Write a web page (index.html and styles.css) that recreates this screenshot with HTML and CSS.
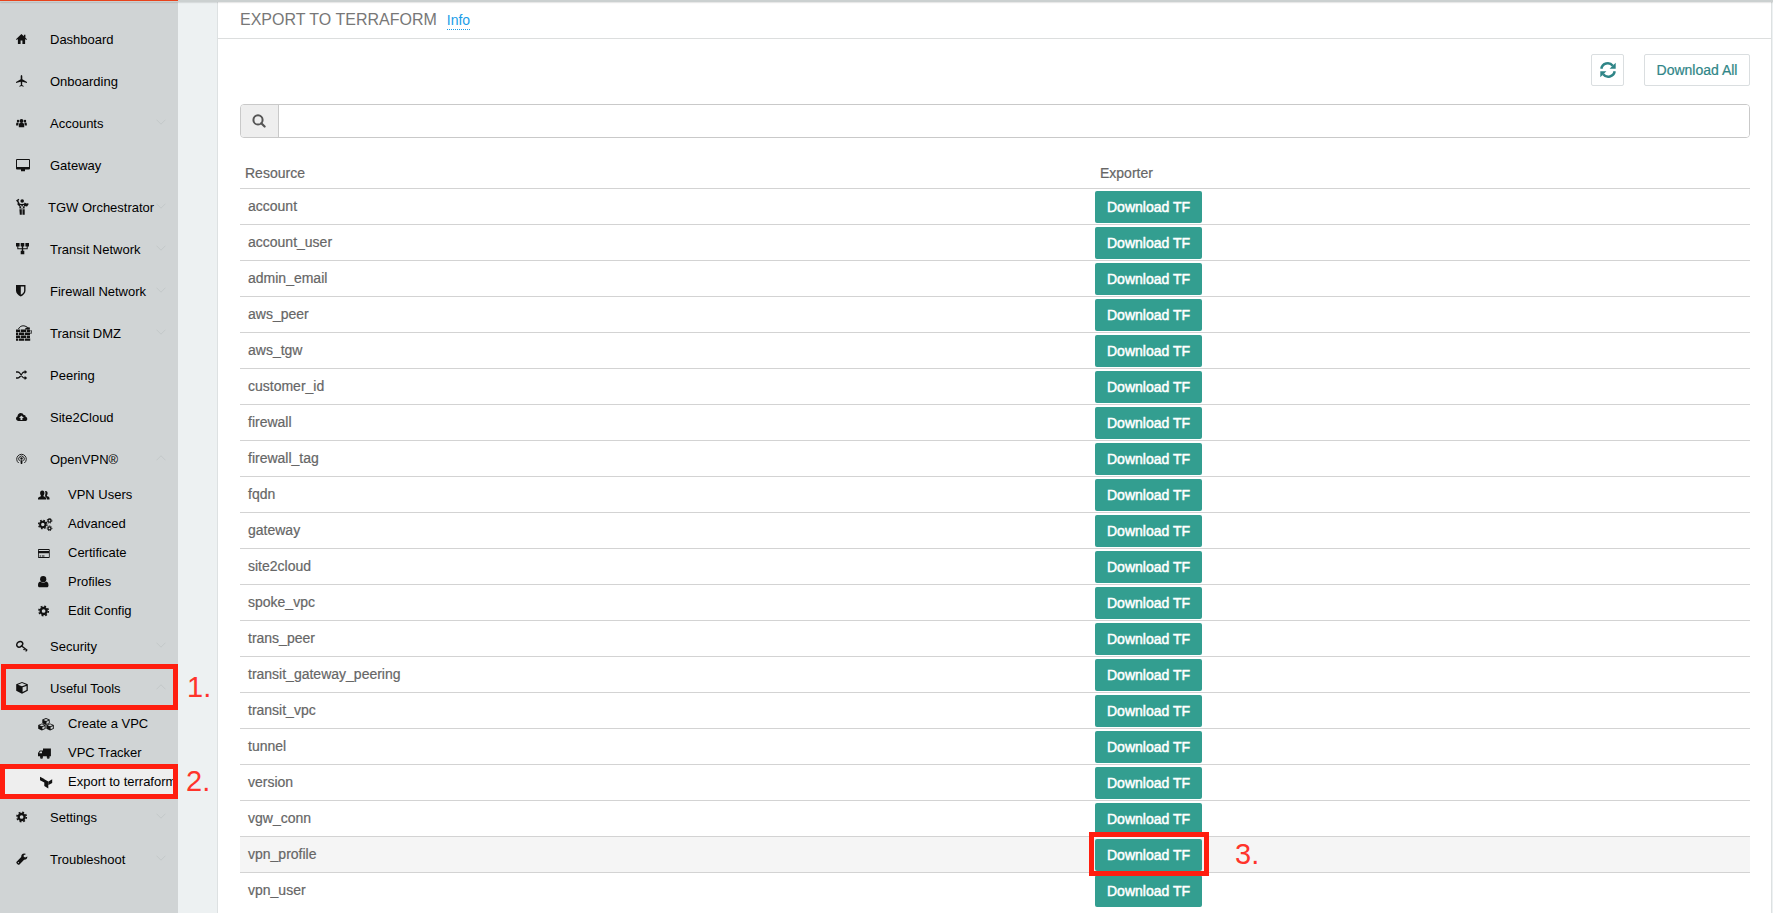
FILE: index.html
```html
<!DOCTYPE html>
<html lang="en">
<head>
<meta charset="utf-8">
<title>Export to Terraform</title>
<link rel="stylesheet" href="styles.css">
</head>
<body>
<svg class="sprite" aria-hidden="true">
  <symbol id="down" viewBox="0 0 10 6"><path d="M.5.7 5 5.2 9.500.7" fill="none" stroke="#c3c8c9" stroke-width="1"/></symbol>
  <symbol id="up" viewBox="0 0 10 6"><path d="M.5 5.300 5 .8l4.500 4.500" fill="none" stroke="#c3c8c9" stroke-width="1"/></symbol>
</svg>
<div class="topbar"><div class="progress"></div></div>
<div class="app">
  <nav class="sidebar">
    <a class="item"><svg class="ico" viewBox="0 0 16 16"><path d="M5.400 1 0 6.200l.8.800L1.900 6v5h2.700V7.500h1.800V11h2.700V6l1.100 1 .8-.8-1.600-1.500V1.700H7.900v1.500z"/></svg><span>Dashboard</span></a>
    <a class="item"><svg class="ico" viewBox="0 0 16 16"><path d="M5.500 0c.6 0 .8.800.8 1.800v2.400l4.700 2.900v1l-4.700-1.300-.2 3.200 1.500.9v.8L5.500 11l-2.100.7v-.8l1.500-.9-.2-3.200L0 8.100v-1l4.700-2.900V1.800C4.700.8 4.900 0 5.500 0z"/></svg><span>Onboarding</span></a>
    <a class="item"><svg class="ico" viewBox="0 0 16 16"><circle cx="5.500" cy="4" r="2"/><path d="M2.800 10.300V8c0-1.300.6-2 1.300-2h2.800c.7 0 1.300.7 1.300 2v2.300z"/><circle cx="2" cy="4" r="1.200"/><circle cx="9" cy="4" r="1.200"/><path d="M.1 8.600C.1 6.500.3 5.500 1 5.500h1.700L2.200 8.600zM10.900 8.600c0-2.100-.2-3.100-.9-3.100H8.300l.5 3.100z"/></svg><span>Accounts</span><svg class="chev"><use href="#down"/></svg></a>
    <a class="item"><svg class="ico" viewBox="0 0 16 16"><path fill-rule="evenodd" d="M1 0h12a1 1 0 0 1 1 1v8.500a1 1 0 0 1-1 1H9v1.800H5v-1.800H1a1 1 0 0 1-1-1V1a1 1 0 0 1 1-1zm0 1.100v6.900h12V1.100z"/></svg><span>Gateway</span></a>
    <a class="item tgw"><svg class="ico tall" viewBox="0 0 16 18"><circle cx="6.200" cy="3" r="1.800"/><path d="M0 2.500 2.600.8l.7.900-1 1 1.500 3 2 .3 2.300-.3.600-1.200 1.600 1 2-.3.200 1.200-1.500 2-2.400-.5v2.600H3.400V8.300L1.500 6.800l.2-2.200zM3.400 11.200h2.400v5.500H3.800zM6.500 11.200h2.200v5.500H6.500z"/><path d="M4.600 7 6 10.200 7.600 7" stroke="#d0d4d5" fill="none"/></svg><span>TGW Orchestrator</span><svg class="chev"><use href="#down"/></svg></a>
    <a class="item"><svg class="ico" viewBox="0 0 16 16"><path d="M0 0h3.600v3.600H2.300v1.700h3.500V3.600H4.700V0h3.600v3.600H7.200v1.700h3.500V3.600H9.400V0H13v3.600h-1.300v2.700H7.200v1.400h1.100v3.600H4.700V7.700h1.100V6.300H1.300V3.600H0z"/></svg><span>Transit Network</span><svg class="chev"><use href="#down"/></svg></a>
    <a class="item"><svg class="ico" viewBox="0 0 16 16"><path fill-rule="evenodd" d="M0 0h9.500v5.700c0 2.500-2.200 4.600-4.700 5.700C2.200 10.300 0 8.200 0 5.700zm4.800 1.500v8.200C6.600 8.700 8.100 7.300 8.100 5.700V1.500z"/></svg><span>Firewall Network</span><svg class="chev"><use href="#down"/></svg></a>
    <a class="item"><svg class="ico tall" viewBox="0 0 16 16"><path d="M0 4.500h4.300v2.400H0zM5 4.500h5v2.400H5zM10.700 4.500H14v2.400h-3.300zM0 7.500h2.300v2.400H0zM3 7.500h5v2.400H3zM8.700 7.500H14v2.400H8.700zM0 10.500h4.300v2.400H0zM5 10.500h5v2.400H5zM10.700 10.500H14v2.400h-3.300zM0 13.500h2.300v2.300H0zM3 13.500h5v2.300H3zM8.700 13.500h5.500v2.300H8.700z"/><path d="M2.500 4C4 .6 7.500.2 10 1.500s2.500 2.200 4 1.300" fill="none" stroke="#111"/><path d="M9 4.600 9.500 3l2.500-.8 2 1.200-.8 1.200z"/><path d="M14.800 5c.8 1.200.6 2.500 0 4" fill="none" stroke="#111"/></svg><span>Transit DMZ</span><svg class="chev"><use href="#down"/></svg></a>
    <a class="item"><svg class="ico" viewBox="0 0 16 16"><path d="M0 3h1.800c1 0 1.700.6 2.300 1.500l2 3c.6.900 1 1.500 2.200 1.500H9M0 9h1.800c1.100 0 1.700-.7 2.300-1.500l2-3C6.600 3.700 7.200 3 8.300 3H9" fill="none" stroke="#111" stroke-width="1.300"/><path d="m8.700 1 2.500 2-2.500 2zM8.700 7l2.500 2-2.500 2z"/></svg><span>Peering</span></a>
    <a class="item"><svg class="ico" viewBox="0 0 16 16"><path fill-rule="evenodd" d="M2.600 10C1.200 10 0 9 0 7.600c0-1 .6-1.800 1.500-2.200C1.500 3.400 3 2 4.700 2c1.500 0 2.500.8 3 2.100 1.200-.4 2.100.5 1.900 1.700 1 .2 1.700 1.100 1.700 2.100 0 1.200-.9 2.100-2.200 2.100zM5.400 4.600 3 7h1.500v2h1.900V7h1.500z"/></svg><span>Site2Cloud</span></a>
    <a class="item"><svg class="ico" viewBox="0 0 16 16"><path d="M2.700 10a4.800 4.800 0 1 1 5.600 0M3.500 7.800a2.800 2.800 0 1 1 4 0" fill="none" stroke="#222" stroke-width="1"/><circle cx="5.500" cy="5.500" r="1.200"/><path d="M4.400 7.300h2.200l-.4 3.700H4.800z"/></svg><span>OpenVPN®</span><svg class="chev"><use href="#up"/></svg></a>
    <div class="sub">
      <a class="child"><svg class="ico" viewBox="0 0 16 16"><path d="M4.300 1.500c1.500 0 2.100 1 2.100 2.500 0 1.200-.5 2-.9 2.400v.8c1.700.7 2.700 1 2.700 2.200v1H0v-1c0-1.200 1.200-1.500 2.900-2.200v-.8C2.500 6 2.100 5.200 2.100 4c0-1.500.7-2.500 2.200-2.500z"/><path d="M7 2c1.800-.5 2.700.6 2.600 2.200 0 1-.3 1.700-.7 2.100v.7c1.600.6 2.600 1 2.600 2.100v1.300H9c0-1.500-.8-2.200-1.900-2.900V6C7.500 5 7.700 3.500 7 2z"/></svg><span>VPN Users</span></a>
      <a class="child"><svg class="ico" viewBox="0 0 16 16"><circle cx="4.800" cy="6.500" r="2.700" fill="none" stroke="#111" stroke-width="2"/><circle cx="4.800" cy="6.500" r="4.200" fill="none" stroke="#111" stroke-width="1.300" stroke-dasharray="1.650 1.650"/><circle cx="11.500" cy="2.700" r="1.500" fill="none" stroke="#111" stroke-width="1.300"/><circle cx="11.500" cy="2.700" r="2.400" fill="none" stroke="#111" stroke-dasharray=".94 .94"/><circle cx="11.500" cy="10.300" r="1.500" fill="none" stroke="#111" stroke-width="1.300"/><circle cx="11.500" cy="10.300" r="2.400" fill="none" stroke="#111" stroke-dasharray=".94 .94"/></svg><span>Advanced</span></a>
      <a class="child"><svg class="ico" viewBox="0 0 16 16"><path fill-rule="evenodd" d="M.8 2h10.100a.8.800 0 0 1 .8.800v7.400a.8.800 0 0 1-.8.800H.8a.8.800 0 0 1-.8-.8V2.800A.8.800 0 0 1 .8 2zm0 .9v1h10.100v-1zM.8 6.300v3.800h10.100V6.300zM1.600 8.600h1.600v.8H1.600zM4 8.600h2.500v.8H4z"/></svg><span>Certificate</span></a>
      <a class="child"><svg class="ico" viewBox="0 0 16 16"><circle cx="5.200" cy="3.200" r="3.100"/><path d="M2.300 5.600c1.900 1.600 4 1.600 5.800 0 1.700.2 2.400 1.700 2.400 3.800 0 1.200-.8 1.900-1.800 1.900H1.800C.8 11.300 0 10.600 0 9.400c0-2.100.700-3.600 2.300-3.800z"/></svg><span>Profiles</span></a>
      <a class="child"><svg class="ico" viewBox="0 0 16 16"><circle cx="5.600" cy="6" r="3" fill="none" stroke="#111" stroke-width="2.300"/><circle cx="5.600" cy="6" r="4.700" fill="none" stroke="#111" stroke-width="1.600" stroke-dasharray="1.850 1.850"/></svg><span>Edit Config</span></a>
    </div>
    <a class="item"><svg class="ico" viewBox="0 0 16 16"><ellipse cx="3.700" cy="4.200" rx="3.200" ry="2.500" transform="rotate(-40 3.700 4.200)" fill="none" stroke="#111" stroke-width="1.500"/><path d="m5.300 5.700 5.900 4.600M7.600 10l1.400-1.900M9.600 11.400l1.500-1.700" fill="none" stroke="#111" stroke-width="1.400"/></svg><span>Security</span><svg class="chev"><use href="#down"/></svg></a>
    <a class="item"><svg class="ico" viewBox="0 0 16 16"><path fill-rule="evenodd" d="m6 0 5.800 2.300v6.500L6 11.700.2 8.800V2.300zM6 1.100 1.900 2.700 6 4.200l4.100-1.500zM6.600 5.300v4.600l3.900-1.800V3.900z"/></svg><span>Useful Tools</span><svg class="chev"><use href="#up"/></svg></a>
    <div class="sub">
      <a class="child"><svg class="ico" viewBox="0 0 16 16"><g id="cube"><path fill-rule="evenodd" d="m8 0 3.700 1.500v3.800L8 7 4.300 5.300V1.500zM8 .9 5.500 1.900 8 2.900l2.500-1zM8.500 3.700v2.200l2.300-1V2.800z"/></g><use href="#cube" x="-4.100" y="5.400"/><use href="#cube" x="4.100" y="5.400"/></svg><span>Create a VPC</span></a>
      <a class="child"><svg class="ico" viewBox="0 0 16 16"><path fill-rule="evenodd" d="M5 1.500h7.900v7.800h-1.200a1.500 1.500 0 0 1-3 0H5a1.500 1.500 0 0 1-3 0H0V6l1.800-2.500H5zM2.200 4.500 1.100 6.200H4V4.500z"/><path d="M8.700 10.200a1.500 1.500 0 0 0 3 0zM2 10.200a1.500 1.500 0 0 0 3 0z"/></svg><span>VPC Tracker</span></a>
      <a class="child active"><svg class="ico" viewBox="0 0 16 16"><path d="m2 .8 4.300 2.300v3.500L2 4.200zM6.300 3.200l4 2.200v7L6.300 10zM10.500 5.400 14.200 3.200v3.700l-3.700 2.200z"/></svg><span>Export to terraform</span></a>
    </div>
    <a class="item"><svg class="ico" viewBox="0 0 16 16"><circle cx="5.600" cy="6" r="3" fill="none" stroke="#111" stroke-width="2.300"/><circle cx="5.600" cy="6" r="4.700" fill="none" stroke="#111" stroke-width="1.600" stroke-dasharray="1.850 1.850"/></svg><span>Settings</span><svg class="chev"><use href="#down"/></svg></a>
    <a class="item"><svg class="ico" viewBox="0 0 16 16"><path fill-rule="evenodd" d="M11.400 3.500c.1 2-1.500 3.400-3.300 3.300L3.500 11.400c-.5.500-1.200.5-1.700 0L.6 10.300c-.5-.5-.5-1.100 0-1.600L5.200 4.100C5 2 6.300.4 8.200.4c.7 0 1.400.2 1.900.5L7.700 2.300v1.500l1.400.8zM2.400 9a.6.600 0 1 0 0 1.200.6.600 0 0 0 0-1.200z"/></svg><span>Troubleshoot</span><svg class="chev"><use href="#down"/></svg></a>
  </nav>
  <main class="main">
    <header class="head"><h1>EXPORT TO TERRAFORM</h1><a class="info">Info</a></header>
    <div class="actions">
      <button class="btn refresh"><svg width="16" height="16" viewBox="0 0 16 16"><path d="M1.300 6.700A6.500 6.500 0 0 1 12.800 3.800M14.700 9.300A6.500 6.500 0 0 1 3.200 12.200" fill="none" stroke="#2f8587" stroke-width="2.500"/><path d="M15.700.8v5.900H9.600zM.3 15.200V9.300h6.100z" fill="#2f8587"/></svg></button>
      <button class="btn">Download All</button>
    </div>
    <div class="search"><span class="addon"><svg width="14" height="14" viewBox="0 0 14 14"><circle cx="6" cy="5.900" r="4.600" fill="none" stroke="#555" stroke-width="2"/><path d="m9.300 9.200 3.300 3.300" stroke="#555" stroke-width="2.200" stroke-linecap="round"/></svg></span><input aria-label="Search"></div>
    <section class="table">
      <div class="row thead"><span>Resource</span><span>Exporter</span></div>
      <div class="row"><span>account</span><button class="tf">Download TF</button></div>
      <div class="row"><span>account_user</span><button class="tf">Download TF</button></div>
      <div class="row"><span>admin_email</span><button class="tf">Download TF</button></div>
      <div class="row"><span>aws_peer</span><button class="tf">Download TF</button></div>
      <div class="row"><span>aws_tgw</span><button class="tf">Download TF</button></div>
      <div class="row"><span>customer_id</span><button class="tf">Download TF</button></div>
      <div class="row"><span>firewall</span><button class="tf">Download TF</button></div>
      <div class="row"><span>firewall_tag</span><button class="tf">Download TF</button></div>
      <div class="row"><span>fqdn</span><button class="tf">Download TF</button></div>
      <div class="row"><span>gateway</span><button class="tf">Download TF</button></div>
      <div class="row"><span>site2cloud</span><button class="tf">Download TF</button></div>
      <div class="row"><span>spoke_vpc</span><button class="tf">Download TF</button></div>
      <div class="row"><span>trans_peer</span><button class="tf">Download TF</button></div>
      <div class="row"><span>transit_gateway_peering</span><button class="tf">Download TF</button></div>
      <div class="row"><span>transit_vpc</span><button class="tf">Download TF</button></div>
      <div class="row"><span>tunnel</span><button class="tf">Download TF</button></div>
      <div class="row"><span>version</span><button class="tf">Download TF</button></div>
      <div class="row"><span>vgw_conn</span><button class="tf">Download TF</button></div>
      <div class="row hover"><span>vpn_profile</span><button class="tf">Download TF</button></div>
      <div class="row"><span>vpn_user</span><button class="tf">Download TF</button></div>
    </section>
  </main>
</div>
<div class="mark box1"></div><div class="num n1">1.</div>
<div class="mark box2"></div><div class="num n2">2.</div>
<div class="mark box3"></div><div class="num n3">3.</div>
</body>
</html>
```
FILE: styles.css
```css
* { box-sizing: border-box; }
body {
  margin: 0;
  position: relative;
  height: 913px;
  overflow: hidden;
  background: #edf1f2;
  font-family: "Liberation Sans", Arial, sans-serif;
  font-size: 14px;
  color: #666;
}
.sprite { position: absolute; width: 0; height: 0; }

/* top edge overlays the page */
.topbar {
  position: absolute;
  top: 0; left: 0; right: 0;
  height: 2px;
  z-index: 2;
  background: #cbd0d0;
  box-shadow: 0 0 2px rgba(0, 0, 0, .35);
}
.progress { width: 178px; height: 1px; background: #e8431c; }

.app { display: flex; height: 913px; overflow: hidden; }
.sidebar {
  width: 178px;
  flex: none;
  padding-top: 18px;
  background: #d0d4d5;
  font-size: 13px;
  color: #000;
  overflow: hidden;
}
.item, .child { display: flex; align-items: center; white-space: nowrap; }
.item { height: 42px; padding: 0 12px 0 16px; }
.item span { flex: 1; }
.child { height: 29px; padding: 0 0 0 38px; }
.active { background: #eee; }
.ico { width: 16px; height: 16px; margin: 4px 18px 0 0; flex: none; fill: #111; }
.child .ico { margin-right: 14px; }
.tall { margin-top: 0; }
.tgw .ico { height: 18px; margin-right: 16px; }
.tgw .chev { margin-left: -10px; }
.chev { width: 10px; height: 6px; margin-bottom: 3px; flex: none; }

.main {
  width: 1555px;
  margin-left: 39px;
  background: #fff;
  border: solid #dde1e2;
  border-width: 0 1px;
}
.head {
  display: flex;
  align-items: baseline;
  height: 39px;
  padding: 11px 22px 0;
  border-bottom: 1px solid #dcdede;
}
h1 { margin: 0 10px 0 0; font-size: 16px; font-weight: 400; color: #777; }
.info { color: #1b9de8; border-bottom: 1px dotted #1b9de8; line-height: 17px; }
.actions {
  display: flex;
  justify-content: flex-end;
  gap: 20px;
  padding: 15px 21px 18px;
}
.btn {
  height: 32px;
  width: 106px;
  padding: 0;
  border: 1px solid #dadee0;
  border-radius: 2px;
  background: #fff;
  font: 14px "Liberation Sans", Arial, sans-serif;
  color: #2f8587;
  -webkit-text-stroke: .2px #2f8587;
}
.refresh { width: 33px; display: flex; align-items: center; justify-content: center; }
.search {
  display: flex;
  height: 34px;
  margin: 0 21px 0 22px;
  border: 1px solid #c9c9c9;
  border-radius: 4px;
  overflow: hidden;
}
.addon {
  width: 38px;
  display: flex;
  align-items: center;
  justify-content: center;
  padding-right: 1px;
  background: #eee;
  border-right: 1px solid #c9c9c9;
}
.search input { flex: 1; border: 0; outline: 0; }

.table { margin: 20px 21px 0 22px; }
.row {
  display: grid;
  grid-template-columns: 855px 1fr;
  align-items: center;
  height: 36px;
  border-bottom: 1px solid #d3d3d3;
}
.row span { padding: 0 0 1px 8px; -webkit-text-stroke: .2px #666; }
.row:last-child { border-color: transparent; }
.thead { height: 31px; }
.row.thead span { padding: 0 5px; }
.hover { background: #f5f5f5; }
.tf {
  width: 107px;
  height: 32px;
  margin-top: 1px;
  padding: 0;
  border: 0;
  border-radius: 2px;
  background: #339e90;
  color: #fff;
  font: 14px "Liberation Sans", Arial, sans-serif;
  -webkit-text-stroke: .5px #fff;
}

/* annotations drawn over the page */
.mark { position: absolute; border: 5px solid #ff1e0f; z-index: 3; }
.box1 { left: 1px; top: 664px; width: 177px; height: 46px; }
.box2 { left: 0; top: 764px; width: 178px; height: 35px; }
.box3 { left: 1089px; top: 832px; width: 120px; height: 44px; }
.num { position: absolute; z-index: 3; font-size: 29px; line-height: 32px; color: #ff342b; }
.n1 { left: 187px; top: 671px; }
.n2 { left: 186px; top: 765px; }
.n3 { left: 1235px; top: 838px; }
```
